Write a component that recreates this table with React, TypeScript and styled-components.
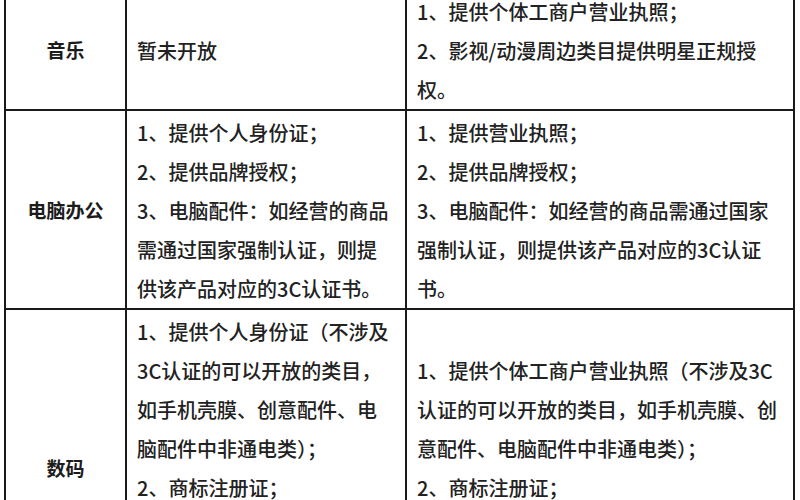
import React from "react";
import styled, {createGlobalStyle} from "styled-components";

type Row = {
	label: string;
	personal: string[];
	business: string[];
};

const rows: Row[] = [
	{
		label: "音乐",
		personal: ["暂未开放"],
		business: ["1、提供个体工商户营业执照；", "2、影视/动漫周边类目提供明星正规授", "权。"],
	},
	{
		label: "电脑办公",
		personal: [
			"1、提供个人身份证；",
			"2、提供品牌授权；",
			"3、电脑配件：如经营的商品",
			"需通过国家强制认证，则提",
			"供该产品对应的3C认证书。",
		],
		business: [
			"1、提供营业执照；",
			"2、提供品牌授权；",
			"3、电脑配件：如经营的商品需通过国家",
			"强制认证，则提供该产品对应的3C认证",
			"书。",
		],
	},
	{
		label: "数码",
		personal: [
			"1、提供个人身份证（不涉及",
			"3C认证的可以开放的类目，",
			"如手机壳膜、创意配件、电",
			"脑配件中非通电类）；",
			"2、商标注册证；",
			"3、涉及3C认证的类目需提",
			"供该产品对应的3C认证书",
			"及品牌授权。",
		],
		business: [
			"1、提供个体工商户营业执照（不涉及3C",
			"认证的可以开放的类目，如手机壳膜、创",
			"意配件、电脑配件中非通电类）；",
			"2、商标注册证；",
			"3、涉及3C认证的类目需提供该产品对应",
			"的3C认证书及品牌授权。",
		],
	},
];

const App: React.FC = () => {
	return (
		<>
			<GlobalStyle />
			<Page>
				<Table>
					{rows.map(row => (
						<TableRow key={row.label}>
							<LabelCell>{row.label}</LabelCell>
							<TextCell>
								{row.personal.map(line => (
									<Line key={line}>{line}</Line>
								))}
							</TextCell>
							<TextCell $last>
								{row.business.map(line => (
									<Line key={line}>{line}</Line>
								))}
							</TextCell>
						</TableRow>
					))}
				</Table>
			</Page>
		</>
	);
};

export default App;

const GlobalStyle = createGlobalStyle`
	html, body {
		margin: 0;
		padding: 0;
		background: #ffffff;
	}
	body {
		font-family: "Noto Sans CJK SC", "Noto Sans", sans-serif;
		color: #222222;
	}
`;

const Page = styled.div`
	width: 800px;
	height: 500px;
	overflow: hidden;
	background: #ffffff;
`;

const Table = styled.div`
	margin: -10px 0 0 4px;
	width: 787px;
	border-left: 2px solid #1a1a1a;
	border-right: 2px solid #1a1a1a;
`;

const TableRow = styled.div`
	display: grid;
	grid-template-columns: 121px 280px 1fr;
	border-bottom: 2px solid #1a1a1a;
`;

const LabelCell = styled.div`
	display: flex;
	align-items: center;
	justify-content: center;
	border-right: 2px solid #1a1a1a;
	font-size: 19px;
	font-weight: 700;
	color: #1c1c1c;
`;

const TextCell = styled.div<{$last?: boolean}>`
	display: flex;
	flex-direction: column;
	justify-content: center;
	padding: 2px 10px 0;
	border-right: ${p => (p.$last ? "none" : "2px solid #1a1a1a")};
	font-size: 20px;
	font-weight: 500;
	line-height: 39px;
`;

const Line = styled.div`
	white-space: nowrap;
`;
